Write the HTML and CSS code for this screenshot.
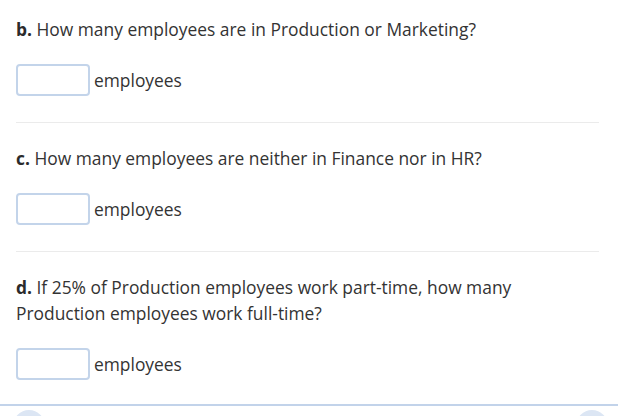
FILE: index.html
```html
<!DOCTYPE html>
<html>
<head>
<meta charset="utf-8">
<link rel="stylesheet" href="styles.css">
</head>
<body>
<div class="page">
  <section class="q">
    <p class="text"><b>b.</b> How many employees are in Production or Marketing?</p>
    <div class="answer"><span class="box"></span><span class="unit">employees</span></div>
  </section>
  <section class="q">
    <p class="text"><b>c.</b> How many employees are neither in Finance nor in HR?</p>
    <div class="answer"><span class="box"></span><span class="unit">employees</span></div>
  </section>
  <section class="q last">
    <p class="text"><b>d.</b> If 25% of Production employees work part-time, how many<br>Production employees work full-time?</p>
    <div class="answer"><span class="box"></span><span class="unit">employees</span></div>
  </section>
</div>
<div class="footer">
  <span class="dot"></span>
  <span class="dot"></span>
</div>
</body>
</html>
```
FILE: styles.css
```css
html, body {
  margin: 0;
  padding: 0;
  background: #fff;
  overflow: hidden;
}
body {
  font-family: "Open Sans", "Noto Sans", sans-serif;
  font-size: 17.4px;
  color: #333;
  width: 618px;
  height: 416px;
}
.page {
  padding: 16px 19px 0 16px;
}
.q {
  border-bottom: 1px solid #ebebeb;
  padding-bottom: 26px;
  margin-bottom: 22px;
}
.q.last {
  border-bottom: none;
  margin-bottom: 0;
  padding-bottom: 24px;
}
.text {
  margin: 0 0 22px 0;
  line-height: 26px;
}
.text b {
  font-weight: 700;
  color: #2b2b2b;
}
.answer {
  display: flex;
  align-items: center;
  gap: 4px;
  height: 32px;
}
.box {
  display: block;
  width: 70px;
  height: 28px;
  border: 2px solid #c3d4ea;
  border-radius: 4px;
  box-sizing: content-box;
}
.unit {
  line-height: 26px;
}
.footer {
  border-top: 2px solid #c2d3ea;
  display: flex;
  justify-content: space-between;
  padding: 4px 10px 0 13px;
  height: 7px;
  overflow: hidden;
}
.dot {
  display: block;
  flex: none;
  width: 32px;
  height: 32px;
  border-radius: 50%;
  background: #dce6f4;
}
```
